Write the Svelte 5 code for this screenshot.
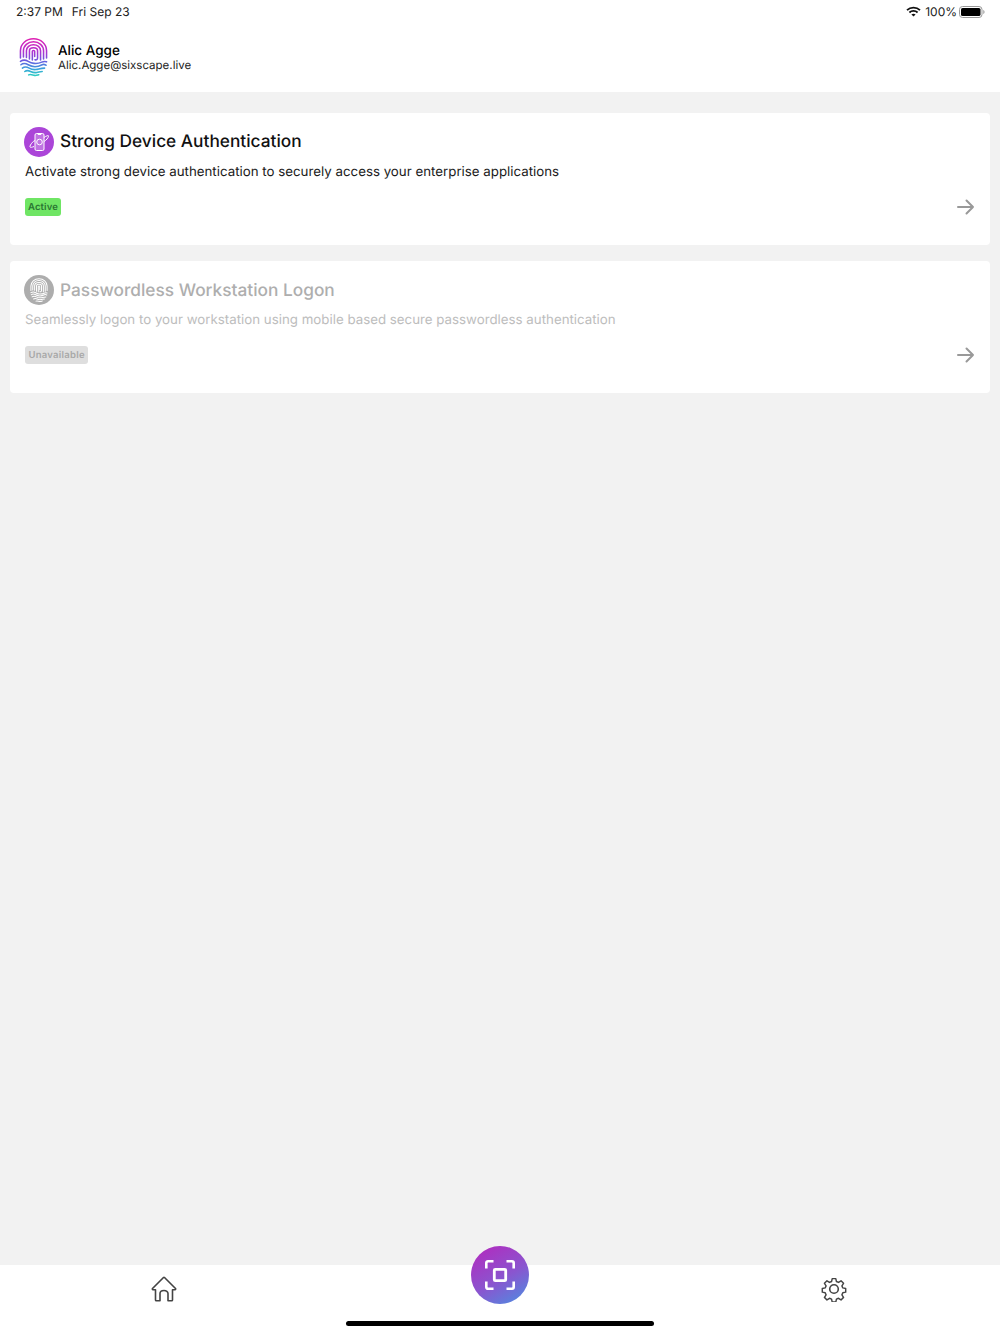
<script>
  const cards = [
    { title: 'Strong Device Authentication', desc: 'Activate strong device authentication to securely access your enterprise applications', badge: 'Active', off: false },
    { title: 'Passwordless Workstation Logon', desc: 'Seamlessly logon to your workstation using mobile based secure passwordless authentication', badge: 'Unavailable', off: true }
  ];
</script>

{#snippet print(stroke, width)}
  <g fill="none" stroke={stroke} stroke-width={width} stroke-linecap="round" stroke-linejoin="round">
    <path d="M1.500 21V13.500C1.500 6.500 7.500 1.200 15 1.200S28.500 6.500 28.500 13.500V21"/>
    <path d="M4.600 20V13.500C4.600 8.300 9.200 4.300 15 4.300S25.400 8.300 25.400 13.500V22"/>
    <path d="M7.700 20.500V13.500C7.700 9.900 11 7.400 15 7.400S22.300 9.900 22.300 13.500V23"/>
    <path d="M10.800 22V13.500C10.800 11.500 12.700 10.400 15 10.400S19.200 11.500 19.200 13.500V21C19.200 22.500 18 23.300 16.500 22.800"/>
    <path d="M13.800 23V14C13.800 13 16.200 13 16.200 14V19.500"/>
    <path d="M1.500 24.500C4.500 22.500 7 23 9.500 24.500S13 26.300 15.500 26.600S21 26.500 23.500 25.300S27 24.500 28.500 25"/>
    <path d="M2 28C4.500 26 7 26.500 9.500 28S14 30 16.500 30S22 29 24 28S26.500 28 28 28.500"/>
    <path d="M3.500 31.500C6 29.500 8 30 10.500 31.500S15 33.200 17.500 33S22 31.800 26.500 31.500"/>
    <path d="M6 35C8 33.500 10 34 12 35S16 36.500 18.500 36S22 35 24 35"/>
    <path d="M10 38.500C12 37.500 14 38.700 16 39S19 38.700 20.500 38.300"/>
  </g>
{/snippet}

<div class="page">
  <header class="top">
    <div class="status">
      <div class="clock"><span>2:37 PM</span><span>Fri Sep 23</span></div>
      <div class="sys">
        <svg width="15" height="11" viewBox="0 0 15 11" fill="none" stroke="#111" stroke-width="1.800">
          <path d="M1 4.200C4.600 .8 10.400 .8 14 4.200"/>
          <path d="M3.400 6.500C5.700 4.400 9.300 4.400 11.600 6.500"/>
          <path d="M7.500 10.500L5.400 8.500C6.600 7.500 8.400 7.500 9.600 8.500Z" fill="#111" stroke="none"/>
        </svg>
        <span class="pct">100%</span>
        <svg width="26" height="12" viewBox="0 0 26 12">
          <rect x=".5" y=".5" width="22.500" height="11" rx="3" fill="none" stroke="#999"/>
          <rect x="2" y="2" width="19.500" height="8" rx="1.600" fill="#000"/>
          <path d="M24.300 4v4c.8-.3 1.200-1.100 1.200-2s-.4-1.700-1.200-2z" fill="#999"/>
        </svg>
      </div>
    </div>
    <div class="user">
      <svg class="logo" width="29" height="40" viewBox="0 0 30 40">
        <defs>
          <linearGradient id="fp" gradientUnits="userSpaceOnUse" x1="0" y1="0" x2="0" y2="40">
            <stop offset="0" stop-color="#e21fb0"/>
            <stop offset=".35" stop-color="#b030d0"/>
            <stop offset=".6" stop-color="#6a5ae0"/>
            <stop offset=".8" stop-color="#3aa0dc"/>
            <stop offset="1" stop-color="#2dd0c0"/>
          </linearGradient>
        </defs>
        {@render print('url(#fp)', 1.600)}
      </svg>
      <div class="who">
        <div class="name">Alic Agge</div>
        <div class="mail">Alic.Agge@sixscape.live</div>
      </div>
    </div>
  </header>

  <main class="list">
    {#each cards as c}
      <section class="card" class:off={c.off}>
        <div class="head">
          <span class="disc">
            {#if c.off}
              <svg width="18" height="24" viewBox="0 0 30 40">{@render print('#fff', 1.700)}</svg>
            {:else}
              <svg width="22" height="22" viewBox="0 0 22 22" fill="none" stroke="#fff">
                <rect x="7" y="2.500" width="9" height="17" rx="1.500" fill="#fff" fill-opacity=".25" stroke-width="1"/>
                <path d="M9.800 3.500h3.400" stroke-width="1"/>
                <circle cx="11.500" cy="11" r="2.800" stroke-width="1"/>
                <path d="M6 15.500C2.500 17 1 16.500 2.500 14S5 10.500 7 9.500M16 6.500C19 4.500 21 4 20.500 5.500S18.500 9 16 10.500" stroke-width="1"/>
              </svg>
            {/if}
          </span>
          <h2>{c.title}</h2>
        </div>
        <p>{c.desc}</p>
        <div class="foot">
          <span class="badge">{c.badge}</span>
          <svg class="arrow" width="18" height="16" viewBox="0 0 18 16" fill="none" stroke="#999" stroke-width="2" stroke-linecap="round" stroke-linejoin="round">
            <path d="M1 8H16M9.500 1.500L16 8L9.500 14.500"/>
          </svg>
        </div>
      </section>
    {/each}
  </main>

  <nav class="tabs">
    <svg width="26" height="26" viewBox="0 0 26 26" fill="none" stroke="#444" stroke-width="1.600" stroke-linejoin="round" stroke-linecap="round">
      <path d="M1.500 12.500L12.500 1.500C12.800 1.200 13.200 1.200 13.500 1.500L24.500 12.500C24.900 13 24.600 13.700 24 13.700H21.500V24C21.500 24.500 21.200 24.800 20.700 24.800H17V17.500C17 15.800 15.300 14.500 13 14.500S9 15.800 9 17.500V24.800H5.300C4.800 24.800 4.500 24.500 4.500 24V13.700H2C1.400 13.700 1.100 13 1.500 12.500Z"/>
    </svg>
    <svg width="26" height="26" viewBox="0 0 26 26" fill="none" stroke="#444" stroke-width="1.600" stroke-linejoin="round">
      <circle cx="13" cy="13" r="4.300"/>
      <path d="M11 1.500h4l.7 3.200 2.300 1 2.800-1.800 2.800 2.800-1.800 2.800 1 2.300 3.200.7v4l-3.200.7-1 2.300 1.800 2.800-2.800 2.800-2.800-1.800-2.300 1-.7 3.200h-4l-.7-3.200-2.300-1-2.800 1.800-2.800-2.800 1.800-2.800-1-2.300-3.200-.7v-4l3.200-.7 1-2.300-1.800-2.800 2.800-2.800 2.800 1.800 2.300-1z" transform="translate(1.300 1.300) scale(.9)"/>
    </svg>
    <button class="fab" aria-label="Scan">
      <svg width="30" height="30" viewBox="0 0 30 30" fill="none" stroke="#fff" stroke-width="2.600">
        <path d="M1.300 8.500V3C1.300 2 2 1.300 3 1.300H8.500M21.500 1.300H27C28 1.300 28.700 2 28.700 3V8.500M28.700 21.500V27C28.700 28 28 28.700 27 28.700H21.500M8.500 28.700H3C2 28.700 1.300 28 1.300 27V21.500"/>
        <rect x="9.300" y="9.300" width="11.400" height="11.400" rx="1" stroke-width="2.800"/>
      </svg>
    </button>
    <span class="indicator"></span>
  </nav>
</div>

<style>
  :global(body) { margin: 0; }
  .page {
    height: 1334px;
    display: flex;
    flex-direction: column;
    background: #f2f2f2;
    font-family: Inter, "Liberation Sans", sans-serif;
    text-rendering: geometricPrecision;
    color: #111;
    overflow: hidden;
  }
  .top { background: #fff; height: 92px; }
  .status {
    height: 23px;
    padding: 0 15px 0 16px;
    display: flex;
    align-items: center;
    justify-content: space-between;
    font-size: 12px;
    color: #222;
  }
  .clock { display: flex; gap: 9px; }
  .sys { display: flex; align-items: center; gap: 4px; }
  .pct { margin-right: -2px; }
  .user { display: flex; align-items: center; gap: 10px; padding: 14px 0 0 19px; }
  .logo { display: block; }
  .name { font-size: 13.500px; font-weight: 500; line-height: 16px; color: #000; }
  .mail { font-size: 11.500px; line-height: 14px; margin-top: -1px; color: #222; }

  .list { flex: 1; padding: 21px 10px 0; display: flex; flex-direction: column; gap: 16px; }
  .card {
    height: 132px;
    box-sizing: border-box;
    background: #fff;
    border-radius: 4px;
    padding: 14px 15px 0 15px;
  }
  .head { display: flex; align-items: center; gap: 6px; margin-left: -1px; }
  .disc {
    width: 30px;
    height: 30px;
    border-radius: 50%;
    background: #ab45d8;
    display: flex;
    align-items: center;
    justify-content: center;
    flex: none;
  }
  h2 { margin: 0; font-size: 17.300px; font-weight: 500; line-height: 30px; color: #111; }
  p { margin: 5px 0 0; font-size: 13.300px; line-height: 20px; color: #1b1b1b; }
  .foot { margin-top: 16px; display: flex; align-items: center; justify-content: space-between; }
  .badge {
    height: 18px;
    box-sizing: border-box;
    padding: 0 3px;
    border-radius: 3px;
    background: #6fe564;
    color: #2a7532;
    font-size: 9.500px;
    font-weight: 600;
    letter-spacing: .15px;
    line-height: 19px;
  }
  .off h2 { color: #aeaeae; line-height: 28px; margin-top: 2px; }
  .off p { color: #bdbdbd; }
  .off .disc { background: #adadad; }
  .off .badge { background: #dedede; color: #a8a8a8; padding: 0 3.500px; letter-spacing: .25px; }

  .tabs {
    position: relative;
    height: 69px;
    background: #fff;
    display: flex;
    justify-content: space-between;
    padding: 11px 153px 0 151px;
    box-sizing: border-box;
  }
  .tabs > svg { display: block; }
  .fab {
    position: absolute;
    left: 471px;
    top: -19px;
    width: 58px;
    height: 58px;
    padding: 0;
    border: none;
    border-radius: 50%;
    background: linear-gradient(150deg, #ae2fc0 10%, #8a55cf 55%, #4a90e2 100%);
    display: flex;
    align-items: center;
    justify-content: center;
  }
  .indicator {
    position: absolute;
    left: 346px;
    top: 56px;
    width: 308px;
    height: 5px;
    border-radius: 3px;
    background: #000;
  }
</style>
